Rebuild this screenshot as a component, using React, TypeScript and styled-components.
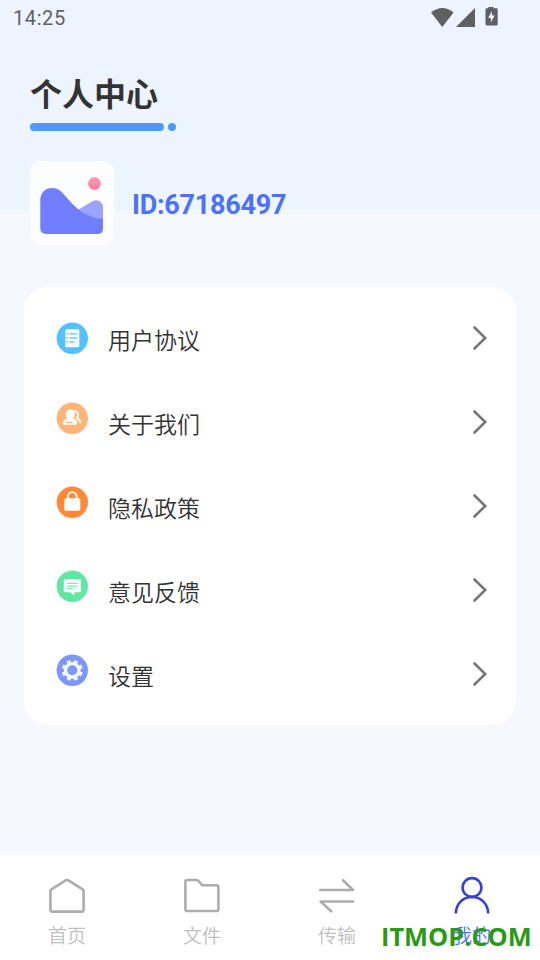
import React from 'react';
import styled, { createGlobalStyle } from 'styled-components';

const GlobalStyle = createGlobalStyle`
  * { box-sizing: border-box; }
  body { margin: 0; background: #f5f8ff; }
`;

const Screen = styled.main`
  width: 540px;
  height: 960px;
  display: flex;
  flex-direction: column;
  overflow: hidden;
  position: relative;
  background: linear-gradient(#edf4ff, #edf5ff) top / 100% 210px no-repeat #f5f8ff;
  font-family: Roboto, 'Noto Sans CJK SC', sans-serif;
`;

const StatusBar = styled.header`
  height: 36px;
  padding: 0 42px 0 13px;
  display: flex;
  align-items: center;
  justify-content: space-between;
  color: #5f6063;
`;

const Clock = styled.time`
  font-size: 20px;
  line-height: 36px;
  font-weight: 450;
  letter-spacing: 0.6px;
`;

const Heading = styled.section`
  height: 125px;
  padding: 33px 30px 0;
`;

const Title = styled.h1`
  margin: 0;
  height: 54px;
  font: 700 32px/46px 'Noto Sans CJK SC', sans-serif;
  color: #333;
`;

const Underline = styled.div`
  display: flex;
  gap: 4px;
`;

const Dash = styled.span<{ $width: number }>`
  width: ${(p) => p.$width}px;
  height: 8px;
  border-radius: 4px;
  background: #4b9bff;
`;

const Profile = styled.section`
  height: 84px;
  margin-left: 30px;
  display: flex;
  align-items: center;
  gap: 18px;
`;

const Avatar = styled.div`
  width: 84px;
  height: 84px;
  border-radius: 11px;
  background: #fcfdff;
  svg { display: block; }
`;

const UserId = styled.strong`
  font-size: 27px;
  line-height: 32px;
  padding-top: 4px;
  font-weight: 700;
  letter-spacing: -0.25px;
  color: #4c70ff;
`;

const Menu = styled.nav`
  margin: 42px 24px 0;
  padding: 9px 28px 9px 32px;
  height: 438px;
  border-radius: 24px;
  background: #fff;
`;

const MenuRow = styled.div`
  height: 84px;
  display: flex;
  align-items: center;
`;

const MenuIcon = styled.svg<{ $lift: number }>`
  width: 32px;
  height: 32px;
  flex: none;
  margin-bottom: ${(p) => p.$lift}px;
`;

const MenuLabel = styled.span`
  flex: 1;
  margin-left: 20px;
  padding-top: 2px;
  font: 350 23px/34px 'Noto Sans CJK SC', sans-serif;
  color: #333;
`;

const Chevron = styled.svg`
  width: 16px;
  height: 26px;
  fill: none;
  stroke: #777;
  stroke-width: 2.6;
  stroke-linecap: round;
`;

const TabBar = styled.footer`
  height: 105px;
  margin-top: auto;
  display: grid;
  grid-template-columns: repeat(4, 1fr);
  background: #fff;
`;

const Tab = styled.div<{ $active?: boolean }>`
  display: flex;
  flex-direction: column;
  align-items: center;
  padding: 20px 1px 0 0;
  color: ${(p) => (p.$active ? '#4c70ff' : '#c0c0c0')};
  font: 350 19px/28px 'Noto Sans CJK SC', sans-serif;
  svg {
    width: 40px;
    height: 40px;
    margin: 0 1px 6px 0;
    fill: none;
    stroke: ${(p) => (p.$active ? '#3540d4' : '#adadad')};
    stroke-width: 2.6;
    stroke-linecap: round;
    stroke-linejoin: round;
  }
`;

const Watermark = styled.div`
  position: absolute;
  left: 381px;
  top: 919px;
  font: 700 25.4px/34px 'Open Sans', sans-serif;
  color: #2b9915;
  white-space: nowrap;
`;

const menuItems = [
  {
    label: '用户协议',
    color: '#54c1ff',
    lift: 0,
    art: (
      <>
        <rect x="9" y="7" width="14" height="18" rx="1.5" fill="#fff" />
        <path d="M13 11.5h8M13 15.5h8M13 19.5h5" stroke="#54c1ff" strokeWidth="1.2" />
        <path d="M10 11.5h1.5M10 15.5h1.5M10 19.5h1.5" stroke="#54c1ff" strokeWidth="1.4" />
      </>
    ),
  },
  {
    label: '关于我们',
    color: '#ffb578',
    lift: 9,
    art: (
      <>
        <path d="M17.5 8.7a4.1 4.1 0 0 1 3 7.1c2.2 1 3.4 2.600 3.500 5" fill="none" stroke="#fff" strokeWidth="1.8" />
        <ellipse cx="14" cy="12.2" rx="4.6" ry="5" fill="#fff" />
        <path d="M11.5 15h5l.2 1.300c2.800.8 4.200 2.300 4.200 4.400 0 1.200-.6 1.800-1.600 1.800H8.200c-1 0-1.600-.6-1.600-1.800 0-2.100 1.500-3.600 4.500-4.400z" fill="#fff" />
        <path d="M9.5 20.2h7" stroke="#ffb578" strokeWidth="1.2" />
      </>
    ),
  },
  {
    label: '隐私政策',
    color: '#ff8936',
    lift: 9,
    art: (
      <>
        <rect x="8" y="12" width="16" height="12.5" rx="1.8" fill="#fff" />
        <path d="M11.7 13v-2.800a4.300 4.300 0 0 1 8.600 0V13" fill="none" stroke="#fff" strokeWidth="1.7" />
      </>
    ),
  },
  {
    label: '意见反馈',
    color: '#62e6a4',
    lift: 9,
    art: (
      <>
        <path d="M8.5 9h15q1 0 1 1v11q0 1-1 1h-5.200l-.4 3.300L14 22H8.500q-1 0-1-1V10q0-1 1-1z" fill="#fff" />
        <path d="M10.5 13h11M10.5 15.8h11M10.5 18.5h6.5" stroke="#62e6a4" strokeWidth="1" />
      </>
    ),
  },
  {
    label: '设置',
    color: '#7c96fa',
    lift: 9,
    art: (
      <>
        {[22.5, 67.5, 112.5, 157.5].map((angle) => (
          <path key={angle} d="M16 5.6v20.8" stroke="#f5f7ff" strokeWidth="4" transform={`rotate(${angle} 16 16)`} />
        ))}
        <circle cx="16" cy="16" r="6.6" fill="none" stroke="#f5f7ff" strokeWidth="3.5" />
        <circle cx="16" cy="16" r="5" fill="#7c96fa" />
      </>
    ),
  },
];

const tabs = [
  { label: '首页', art: <path d="M19 5.1q1-.6 2 0l15 9.500q.6.4.6 1.200v19q0 1.800-1.800 1.800H5.200q-1.800 0-1.800-1.800v-19q0-.8.6-1.200z" /> },
  { label: '文件', art: <path d="M5.200 5h9.500q.8 0 1.400.7l4 4.500H34.600q1.800 0 1.800 1.800v22.200q0 1.800-1.800 1.800H5.200q-1.800 0-1.800-1.800V6.800Q3.400 5 5.200 5z" /> },
  { label: '传输', art: <path d="M3.3 15H36L26 5.3M36.2 26.5H3.6l10.6 9.7" /> },
  { label: '我的', art: <><circle cx="20" cy="12.5" r="9.4" /><path d="M3.8 38.5C4 29 10.7 22 20 22s16 7 16.2 16.5" strokeLinecap="butt" /></> },
];

export default function App() {
  return (
    <Screen>
      <GlobalStyle />
      <StatusBar>
        <Clock>14:25</Clock>
        <svg width="67" height="24" viewBox="0 0 67 24" fill="#5f6063">
          <path d="M0 6.5Q11.3-2.7 22.6 6.5L11.3 21z" />
          <path d="M44 2v19H25z" />
          <path d="M57.3 1h5.200v1.300h3q1.200 0 1.200 1.200V18q0 1.500-1.500 1.500H56q-1.500 0-1.500-1.500V3.500q0-1.200 1.200-1.200h1.600z" />
          <path d="M60.9 5.1l-3.700 6.800h2.700v4.700l3.700-7h-2.700z" fill="#edf4ff" />
        </svg>
      </StatusBar>
      <Heading>
        <Title>个人中心</Title>
        <Underline>
          <Dash $width={134} />
          <Dash $width={8} />
        </Underline>
      </Heading>
      <Profile>
        <Avatar>
          <svg width="84" height="84" viewBox="0 0 84 84">
            <defs>
              <linearGradient id="sun" x2="0" y2="1">
                <stop stopColor="#ff9eb7" />
                <stop offset="1" stopColor="#ff7aa0" />
              </linearGradient>
            </defs>
            <circle cx="64.5" cy="22.5" r="6.4" fill="url(#sun)" />
            <path d="M47 49.5l15-9Q66 38 70 40.5q3 2 3 6V60H55z" fill="#9ba4ff" />
            <path d="M10.3 39C10.3 31.5 15.5 27 22 27c4.500 0 7.600 1.800 10.500 5C42.500 42.500 52 56.500 73 58v9.500q0 5.500-5.500 5.500H16q-5.700 0-5.700-5.700z" fill="#717fff" />
          </svg>
        </Avatar>
        <UserId>ID:67186497</UserId>
      </Profile>
      <Menu>
        {menuItems.map((item) => (
          <MenuRow key={item.label}>
            <MenuIcon viewBox="-0.3 -0.3 32 32" $lift={item.lift}>
              <circle cx="16" cy="16" r="15.7" fill={item.color} />
              {item.art}
            </MenuIcon>
            <MenuLabel>{item.label}</MenuLabel>
            <Chevron viewBox="0 0 16 26">
              <path d="M2.5 2.5L13.2 13L2.5 23.5" />
            </Chevron>
          </MenuRow>
        ))}
      </Menu>
      <TabBar>
        {tabs.map((tab, index) => (
          <Tab key={tab.label} $active={index === 3}>
            <svg viewBox="0 0 40 40">{tab.art}</svg>
            {tab.label}
          </Tab>
        ))}
      </TabBar>
      <Watermark>ITMOP.COM</Watermark>
    </Screen>
  );
}
